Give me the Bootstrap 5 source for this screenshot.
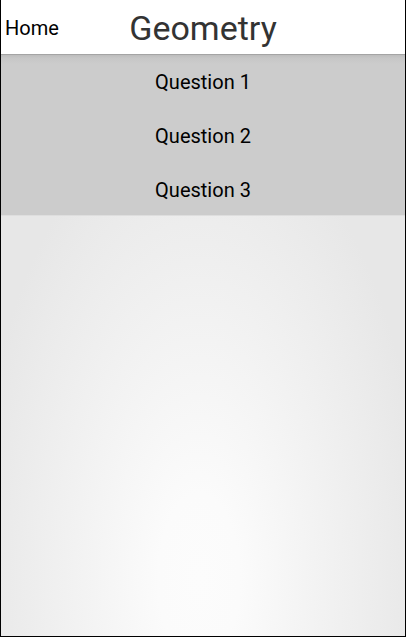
<!DOCTYPE html>
<html lang="en">
<head>
<meta charset="utf-8">
<meta name="viewport" content="width=device-width, initial-scale=1">
<title>Geometry</title>
<link href="https://cdn.jsdelivr.net/npm/bootstrap@5.3.0/dist/css/bootstrap.min.css" rel="stylesheet">
<style>
body { font-family: Roboto, "Liberation Sans", sans-serif; font-size: 20px; color: #000; }
.screen { border: 1px solid #000; border-top: 0; background: radial-gradient(ellipse 56% 74% at 49% 91%, #fcfcfc 0%, #fbfbfb 18%, #f2f2f2 55%, #ebebeb 84%, #e7e7e7 100%); }
.topbar { display: grid; grid-template-columns: 1fr auto 1fr; height: 54px; }
.topbar h1 { font-size: 34px; line-height: 54px; font-weight: 400; color: #333; }
.topbar a { line-height: 54px; padding-top: 1px; padding-left: 4px; }
.questions { padding-top: 3px; gap: 4px; background: linear-gradient(#a4a4a4 0, #a4a4a4 1px, #bcbcbc 1px, #c6c6c6 4px, #ccc 10px); box-shadow: 0 1px 0 #dedede; }
.questions a { line-height: 50px; }
</style>
</head>
<body>
<div class="screen min-vh-100 d-flex flex-column">
  <header class="topbar bg-white align-items-center">
    <a href="#" class="text-black text-decoration-none">Home</a>
    <h1 class="m-0">Geometry</h1>
  </header>
  <main>
    <ul class="questions d-flex flex-column list-unstyled m-0 text-center">
      <li><a href="#" class="d-block text-black text-decoration-none">Question 1</a></li>
      <li><a href="#" class="d-block text-black text-decoration-none">Question 2</a></li>
      <li><a href="#" class="d-block text-black text-decoration-none">Question 3</a></li>
    </ul>
  </main>
</div>
<script src="https://cdn.jsdelivr.net/npm/bootstrap@5.3.0/dist/js/bootstrap.bundle.min.js"></script>
</body>
</html>
